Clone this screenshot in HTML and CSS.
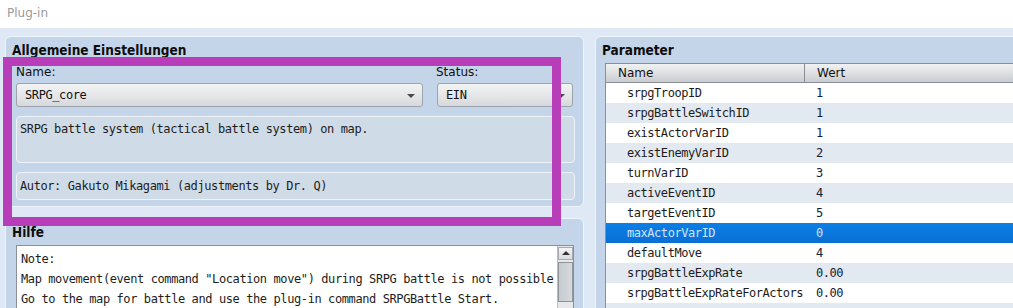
FILE: index.html
```html
<!DOCTYPE html>
<html lang="de">
<head>
<meta charset="utf-8">
<title>Plug-in</title>
<link rel="stylesheet" href="styles.css">
</head>
<body>
<div class="window">
  <div class="titlebar">Plug-in</div>
  <div class="main">
    <div class="left">
      <section class="panel general">
        <h2 class="panel-title">Allgemeine Einstellungen</h2>
        <div class="field-row">
          <div class="field name-field">
            <div class="label">Name:</div>
            <div class="select"><span class="mono">SRPG_core</span><i class="arrow"></i></div>
          </div>
          <div class="field status-field">
            <div class="label">Status:</div>
            <div class="select"><span class="mono">EIN</span><i class="arrow"></i></div>
          </div>
        </div>
        <div class="info desc mono">SRPG battle system (tactical battle system) on map.</div>
        <div class="info author mono">Autor: Gakuto Mikagami (adjustments by Dr. Q)</div>
      </section>
      <section class="panel help">
        <h2 class="panel-title">Hilfe</h2>
        <div class="helpbox">
          <div class="helptext mono">
            <div>Note:</div>
            <div>Map movement(event command "Location move") during SRPG battle is not possible</div>
            <div>Go to the map for battle and use the plug-in command SRPGBattle Start.</div>
          </div>
          <div class="scrollbar">
            <div class="sb-btn"><i class="up"></i></div>
            <div class="sb-thumb"></div>
          </div>
        </div>
      </section>
    </div>
    <section class="panel params">
      <h2 class="panel-title">Parameter</h2>
      <div class="table">
        <div class="thead">
          <div class="c-name">Name</div>
          <div class="c-val">Wert</div>
        </div>
        <div class="row"><div class="c-name">srpgTroopID</div><div class="c-val">1</div></div>
        <div class="row"><div class="c-name">srpgBattleSwitchID</div><div class="c-val">1</div></div>
        <div class="row"><div class="c-name">existActorVarID</div><div class="c-val">1</div></div>
        <div class="row"><div class="c-name">existEnemyVarID</div><div class="c-val">2</div></div>
        <div class="row"><div class="c-name">turnVarID</div><div class="c-val">3</div></div>
        <div class="row"><div class="c-name">activeEventID</div><div class="c-val">4</div></div>
        <div class="row"><div class="c-name">targetEventID</div><div class="c-val">5</div></div>
        <div class="row selected"><div class="c-name">maxActorVarID</div><div class="c-val">0</div></div>
        <div class="row"><div class="c-name">defaultMove</div><div class="c-val">4</div></div>
        <div class="row"><div class="c-name">srpgBattleExpRate</div><div class="c-val">0.00</div></div>
        <div class="row"><div class="c-name">srpgBattleExpRateForActors</div><div class="c-val">0.00</div></div>
        <div class="row"><div class="c-name"></div><div class="c-val"></div></div>
      </div>
    </section>
  </div>
  <div class="highlight"></div>
</div>
</body>
</html>
```

FILE: styles.css
```css
* { box-sizing: border-box; }
html, body { margin: 0; padding: 0; }
body {
  width: 1013px;
  height: 308px;
  overflow: hidden;
  background: #dfe9f6;
  font-family: "DejaVu Sans", sans-serif;
  font-size: 12px;
  color: #111;
}
.window { position: relative; width: 1013px; height: 308px; overflow: hidden; }
.mono {
  font-family: "DejaVu Sans Mono", monospace;
  font-size: 12px;
  letter-spacing: -0.4px;
}
.titlebar {
  height: 28px;
  background: #fff;
  color: #9a9a9a;
  padding-left: 7px;
  line-height: 27px;
  font-size: 12px;
}
.main {
  display: flex;
  gap: 11px;
  padding: 8px 0 0 5px;
}
.left {
  width: 579px;
  display: flex;
  flex-direction: column;
  gap: 11px;
}
.panel {
  background: #c4d5e9;
  border: 1px solid #eef4fb;
  border-radius: 6px;
}
.panel-title {
  margin: 0 0 0 -4px;
  font-size: 13.5px;
  font-weight: bold;
  font-stretch: condensed;
  line-height: 14px;
  color: #0d0d0d;
}
.general {
  height: 171px;
  padding: 6px 8px 0 10px;
}
.field-row {
  display: flex;
  gap: 14px;
  margin-top: 8px;
}
.name-field { width: 407px; }
.status-field { width: 136px; }
.label {
  line-height: 14px;
  height: 14px;
  margin-bottom: 4px;
  font-size: 12px;
  color: #111;
}
.status-field .label { margin-left: -1px; }
.select {
  position: relative;
  height: 24px;
  border: 1px solid #9da3aa;
  border-radius: 3px;
  background: linear-gradient(#f3f3f3, #e6e7e9 50%, #d6d8db);
  line-height: 22px;
  padding-left: 8px;
  color: #111;
}
.arrow {
  position: absolute;
  right: 7px;
  top: 10px;
  width: 0;
  height: 0;
  border-left: 4px solid transparent;
  border-right: 4px solid transparent;
  border-top: 4px solid #4a4a4a;
}
.info {
  width: 559px;
  background: #cfdbe7;
  border: 1px solid #eef3f9;
  border-radius: 4px;
  color: #1d1d1d;
  padding: 4px 3px 2px;
}
.desc { height: 47px; margin-top: 9px; line-height: 17px; }
.author { height: 28px; margin-top: 9px; line-height: 20px; padding-top: 3px; }

.help {
  height: 120px;
  padding: 6px 8px 0 10px;
}
.helpbox {
  margin-top: 6px;
  width: 558px;
  height: 90px;
  background: #fff;
  border: 1px solid #8c9096;
  display: flex;
}
.helptext {
  flex: 1;
  padding: 3px 0 0 4px;
  line-height: 20px;
  color: #1d1d1d;
  white-space: nowrap;
  overflow: hidden;
}
.scrollbar {
  width: 16px;
  background: #e6e8ea;
  border-left: 1px solid #b9bdc2;
  display: flex;
  flex-direction: column;
  gap: 2px;
  padding-top: 1px;
}
.sb-btn {
  position: relative;
  height: 13px;
  background: linear-gradient(#f4f4f4, #d9dbde);
  border: 1px solid #a7abb0;
}
.up {
  position: absolute;
  left: 3px;
  top: 3px;
  width: 0; height: 0;
  border-left: 4px solid transparent;
  border-right: 4px solid transparent;
  border-bottom: 4px solid #333;
}
.sb-thumb {
  height: 40px;
  background: linear-gradient(90deg, #c6cbd1, #d6dade);
  border: 1px solid #8e949a;
}

.params {
  width: 440px;
  height: 300px;
  padding: 6px 0 0 9px;
}
.params .panel-title { margin-left: -3px; }
.table {
  margin-top: 6px;
  width: 420px;
  background: #fff;
  border-left: 1px solid #8c9096;
}
.thead {
  display: flex;
  height: 20px;
  border-top: 1px solid #8a8e93;
  border-bottom: 1px solid #8a8e93;
  background: linear-gradient(#f1f1f2, #dcdee1 55%, #c9ccd0);
  line-height: 18px;
  font-size: 12px;
  color: #111;
}
.thead .c-name {
  width: 199px;
  padding-left: 12px;
  border-right: 1px solid #8a8e93;
}
.thead .c-val { padding-left: 12px; }
.row {
  display: flex;
  height: 20px;
  line-height: 20px;
  font-family: "DejaVu Sans Mono", monospace;
  font-size: 12px;
  letter-spacing: -0.45px;
  color: #1c1c1c;
}
.row:nth-child(odd) { background: #e3e9f0; }
.row .c-name { width: 199px; padding-left: 21px; }
.row .c-val { padding-left: 11px; color: #15203a; }
.row.selected {
  background: linear-gradient(#0b7fe6, #0a6fd4);
}
.row.selected .c-name, .row.selected .c-val { color: #cfe4ff; }

.highlight {
  position: absolute;
  left: 3px;
  top: 57px;
  width: 558px;
  height: 169px;
  border: 9px solid #b83db9;
  pointer-events: none;
}
```
